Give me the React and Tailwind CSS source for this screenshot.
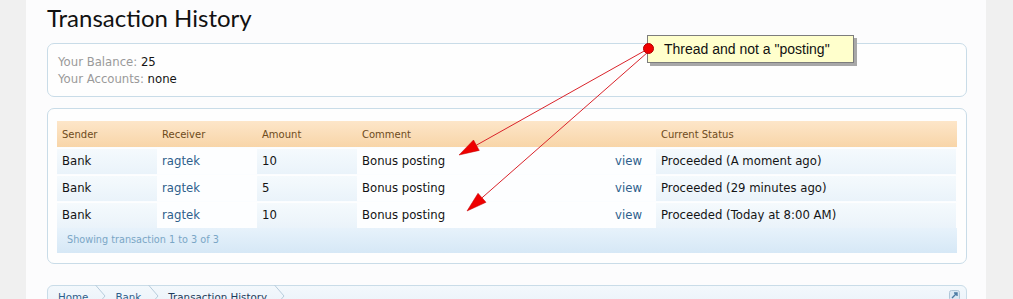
import React from "react";

const rows = [
  { sender: "Bank", receiver: "ragtek", amount: "10", comment: "Bonus posting", status: "Proceeded (A moment ago)" },
  { sender: "Bank", receiver: "ragtek", amount: "5", comment: "Bonus posting", status: "Proceeded (29 minutes ago)" },
  { sender: "Bank", receiver: "ragtek", amount: "10", comment: "Bonus posting", status: "Proceeded (Today at 8:00 AM)" },
];

const alt = "bg-gradient-to-b from-[#f5fafd] to-[#eaf3fa]";
const pri = "bg-[#fdfeff]";

function Row({ r }) {
  return (
    <div className="flex h-[27px] items-center border-t border-[#fbfdff] pt-px text-[11.7px] text-[#141414]">
      <div className={`w-[100px] h-full flex items-center pl-[5px] ${alt}`}>{r.sender}</div>
      <div className={`w-[100px] h-full flex items-center pl-[5px] text-[#2f5f8c] ${pri}`}>{r.receiver}</div>
      <div className={`w-[100px] h-full flex items-center pl-[5px] ${alt}`}>{r.amount}</div>
      <div className={`w-[299px] h-full flex items-center justify-between pl-[5px] pr-[14px] ${pri}`}>
        <span>{r.comment}</span>
        <span className="text-[#2f5f8c]">view</span>
      </div>
      <div className={`w-[300px] h-full flex items-center pl-[5px] ${alt}`}>{r.status}</div>
    </div>
  );
}

function Chevron() {
  return (
    <svg width="11" height="26" className="ml-[7px] mr-[9px] self-start -mt-px shrink-0" viewBox="0 0 11 26">
      <polyline points="0.5,0 10,11 0.5,22" fill="none" stroke="#b7ccdc" strokeWidth="1" />
    </svg>
  );
}

export default function App() {
  return (
    <div
      className="relative flex h-[299px] w-full overflow-hidden bg-[#f0f0f0]"
      style={{ fontFamily: '"DejaVu Sans", Verdana, sans-serif' }}
    >
      <div className="w-[26px] shrink-0" />
      <div className="w-[960px] shrink-0 bg-[#fcfcfd] pl-[21px] pr-[19px]">
        <div className="h-[43px] pt-[6px]">
          <h1
            className="text-[24px] leading-[24px] text-[#111]"
            style={{ fontFamily: 'Lato, "Open Sans", sans-serif' }}
          >
            Transaction History
          </h1>
        </div>

        <div className="h-[54px] rounded-[7px] border border-[#c9dce8] bg-[#fefefe] pl-[10px] pt-[10px] text-[11.7px] leading-[17px]">
          <div>
            <span className="text-[#9a9a9a]">Your Balance:</span> <span className="text-[#141414]">25</span>
          </div>
          <div>
            <span className="text-[#9a9a9a]">Your Accounts:</span> <span className="text-[#141414]">none</span>
          </div>
        </div>

        <div className="mt-[11px] rounded-[7px] border border-[#c9dce8] bg-[#fefefe] px-[9px] pt-[12px] pb-[10px]">
          <div className="flex h-[26px] items-center bg-gradient-to-b from-[#fde6c9] to-[#f8d5a8] text-[10px] text-[#6e4b1c]">
            <div className="w-[100px] pl-[5px]">Sender</div>
            <div className="w-[100px] pl-[5px]">Receiver</div>
            <div className="w-[100px] pl-[5px]">Amount</div>
            <div className="w-[299px] pl-[5px]">Comment</div>
            <div className="w-[300px] pl-[5px]">Current Status</div>
          </div>
          {rows.map((r, i) => (
            <Row key={i} r={r} />
          ))}
          <div className="flex h-[25px] items-center bg-gradient-to-b from-[#e7f2fb] to-[#d6e8f6] pl-[10px] text-[9.7px] text-[#7aa6c6]">
            Showing transaction 1 to 3 of 3
          </div>
        </div>

        <div className="relative mt-[21px] flex h-[26px] items-center rounded-t-[6px] border border-[#c9dce8] bg-gradient-to-b from-[#f3f8fc] to-[#e8f1f9] pl-[10px] text-[10.3px]">
          <span className="text-[#2f5f8c]">Home</span>
          <Chevron />
          <span className="text-[#2f5f8c]">Bank</span>
          <Chevron />
          <span className="text-[#1e3c5c]">Transaction History</span>
          <Chevron />
          <svg
            width="11"
            height="11"
            viewBox="0 0 11 11"
            className="absolute right-[6px] top-[4px]"
          >
            <rect x="0.5" y="0.5" width="10" height="10" rx="2" fill="#dbe8f3" stroke="#b0c6d8" />
            <path d="M3 8 L8 3 M5 3 H8 V6" stroke="#4b7aa3" strokeWidth="1.4" fill="none" />
          </svg>
        </div>
      </div>
      <div className="flex-1" />

      {/* annotation overlay */}
      <svg
        className="pointer-events-none absolute left-0 top-0"
        width="1013"
        height="299"
        viewBox="0 0 1013 299"
      >
        <line x1="646" y1="50" x2="476.4" y2="145.2" stroke="#d9232a" strokeWidth="1" />
        <polygon points="459,155 479.3,150.4 473.5,140.0" fill="#ee0000" stroke="#c00000" strokeWidth="0.5" />
        <line x1="648" y1="52" x2="482" y2="197.8" stroke="#d9232a" strokeWidth="1" />
        <polygon points="467,211 486.0,202.3 478.0,193.3" fill="#ee0000" stroke="#c00000" strokeWidth="0.5" />
      </svg>
      <div className="absolute left-[647px] top-[35px] flex h-[28px] w-[207px] items-center border border-[#7d7d7d] bg-[#ffffcc] pl-[16px] shadow-[3px_3px_0_#a8a8a8]">
        <span
          className="text-[14px] text-[#111]"
          style={{ fontFamily: '"Liberation Sans", Arial, sans-serif' }}
        >
          Thread and not a "posting"
        </span>
      </div>
      <div className="absolute left-[643px] top-[43px] h-[11px] w-[11px] rounded-full border border-[#b00000] bg-[#f20000]" />
    </div>
  );
}
